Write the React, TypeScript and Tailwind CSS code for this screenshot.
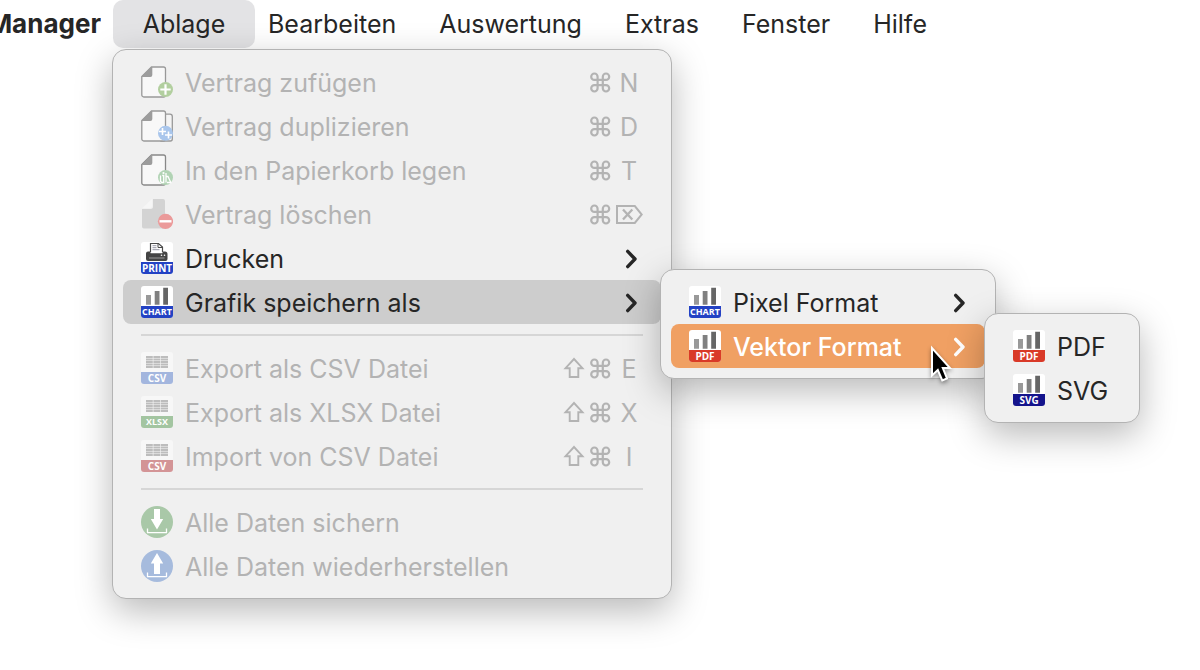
import type { ReactNode } from "react";

const DocOutline = ({ stroke = "#999999" }: { stroke?: string }) => (
  <>
    <path d="M10.5 1H22.5a2 2 0 0 1 2 2V29a2 2 0 0 1-2 2H2.800a2 2 0 0 1-2-2V10.500Z" fill="#f8f8f8" stroke={stroke} strokeWidth="1.300" />
    <path d="M11.300 1V9a2 2 0 0 1-2 2H.8V10.300L10.300 1Z" fill="#9c9c9c" />
  </>
);

const Svg = ({ children }: { children: ReactNode }) => (
  <svg viewBox="0 0 32 32" className="size-8 shrink-0" fill="none" aria-hidden="true">
    {children}
  </svg>
);

const AddIcon = () => (
  <Svg>
    <DocOutline />
    <circle cx="24.5" cy="23.5" r="7.5" fill="#b2cf9f" />
    <path d="M24.5 18.3v10.400M19.300 23.500h10.400" stroke="#fff" strokeWidth="2.200" />
  </Svg>
);

const DuplicateIcon = () => (
  <Svg>
    <path d="M23 4.2h6a2.300 2.300 0 0 1 2.300 2.300V29a2 2 0 0 1-2 2H20Z" fill="#f4f4f4" stroke="#999999" strokeWidth="1.300" />
    <DocOutline />
    <circle cx="24.5" cy="23.3" r="7.5" fill="#a9c6ec" />
    <path d="M21.5 18v7M18 21.500h7M27.500 21.500v7M24 25h7" stroke="#fff" strokeWidth="1.600" />
  </Svg>
);

const TrashIcon = () => (
  <Svg>
    <DocOutline stroke="#888888" />
    <circle cx="24.5" cy="23.5" r="7.5" fill="#b1d3b4" />
    <path d="M19.500 21.500v5a2 2 0 0 0 2 2h1.200V21.500h-1.500" stroke="#fff" strokeWidth="1.300" />
    <path d="M25 28.500v-9.500M25 22.500h2l2.800 6H26" stroke="#fff" strokeWidth="1.300" />
    <circle cx="22.500" cy="19" r="1.100" fill="#fff" />
  </Svg>
);

const DeleteIcon = () => (
  <Svg>
    <path d="M12 1H22a2 2 0 0 1 2 2V30.5H3a2 2 0 0 1-2-2V11H9.5a2.5 2.5 0 0 0 2.5-2.5Z" fill="#d3d3d3" />
    <path d="M11 1V8a2 2 0 0 1-2 2H1.5Z" fill="#f6f6f6" />
    <circle cx="24.5" cy="23.3" r="7.6" fill="#eb9a9a" />
    <path d="M18.5 23.3h12" stroke="#fff" strokeWidth="2.4" />
  </Svg>
);

const TransferIcon = ({ up = false }: { up?: boolean }) => (
  <Svg>
    <circle cx="16" cy="16" r="16" fill={up ? "#a6bbdd" : "#a9c8a8"} />
    {up ? (
      <path d="M16 3l6.200 10.500h-3.200V24h-6V13.500H9.800Z" fill="#fff" />
    ) : (
      <path d="M13 3h6v10h3.200L16 23.500 9.800 13h3.200Z" fill="#fff" />
    )}
    <path d="M6.500 22.500V26.700h19v-4.200" stroke="#fff" strokeWidth="1.300" />
  </Svg>
);

const FileIcon = ({
  label,
  strip,
  size = "text-[10px]",
  faded = false,
  children,
}: {
  label: string;
  strip: string;
  size?: string;
  faded?: boolean;
  children: ReactNode;
}) => (
  <span className={`flex size-8 shrink-0 flex-col overflow-hidden rounded-[3px] ${faded ? "bg-[#f7f7f7]" : "bg-white"}`}>
    <svg viewBox="0 0 32 20" className="h-5 w-8" fill="none" aria-hidden="true">
      {children}
    </svg>
    <span
      className={`flex h-3 items-center justify-center font-['Open_Sans','Noto_Sans',sans-serif] leading-3 font-bold text-white ${size} ${strip}`}
    >
      {label}
    </span>
  </span>
);

const Bars = () => (
  <>
    <path d="M5 9h5v9.700H5Z" fill="#999" />
    <path d="M13.700 5h4.800v13.700h-4.800Z" fill="#808080" />
    <path d="M22.200 1.700H27v17h-4.800Z" fill="#666" />
  </>
);

const Sheet = () => (
  <>
    {[4, 6.5, 9, 11.5, 14].map((y) => (
      <path key={y} d={`M5 ${y}h6.800v1.900H5ZM12.400 ${y}h7v1.900h-7ZM20 ${y}h7v1.900h-7Z`} fill="#bdbdbd" />
    ))}
  </>
);

const Printer = () => (
  <>
    <path d="M9.500 10V1.500h8l4 3.500v5" fill="#fff" stroke="#4a4a4a" strokeWidth="1.200" />
    <path d="M17 1.500V5.500h4" stroke="#4a4a4a" strokeWidth="1" />
    <path d="M11.500 3.700h4M11.500 5.700h4M11.500 7.700h7" stroke="#8b8b9c" strokeWidth=".9" />
    <path d="M7 9.500h2.500v1.800h12V9.500H24a2.500 2.500 0 0 1 2.500 2.500v5a2 2 0 0 1-2 2H7a2 2 0 0 1-2-2V11.500a2 2 0 0 1 2-2Z" fill="#444" />
    <path d="M8 16h15.500" stroke="#999" strokeWidth="1" />
    <circle cx="20.500" cy="13.300" r=".8" fill="#fff" />
    <circle cx="23.500" cy="13.300" r=".8" fill="#fff" />
  </>
);

const ChartIcon = () => (
  <FileIcon label="CHART" strip="bg-[#2342c4]" size="text-[9px]">
    <Bars />
  </FileIcon>
);
const PdfIcon = () => (
  <FileIcon label="PDF" strip="bg-[#d93a28]">
    <Bars />
  </FileIcon>
);

const Glyph = ({ children, label }: { children: ReactNode; label: string }) => (
  <svg viewBox="0 0 26 26" className="size-[26px]" fill="none" stroke="currentColor" strokeWidth="2.200" role="img" aria-label={label}>
    {children}
  </svg>
);

const CommandKey = () => (
  <Glyph label="Command">
    <path d="M8.600 10.900h5.200v5.200H8.600ZM8.600 10.900H5.400A3.200 3.200 0 1 1 8.600 7.700ZM13.800 10.900V7.700A3.200 3.200 0 1 1 17 10.900ZM13.800 16.100H17A3.200 3.200 0 1 1 13.800 19.300ZM8.600 16.100V19.300A3.200 3.200 0 1 1 5.400 16.100Z" />
  </Glyph>
);

const ShiftKey = () => (
  <Glyph label="Shift">
    <path d="M11 4L19.500 13.200H15.300V22H6.700V13.200H2.500Z" strokeWidth="1.900" />
  </Glyph>
);

const DeleteKey = () => (
  <svg viewBox="0 0 28 26" className="h-[26px] w-7" fill="none" stroke="currentColor" strokeWidth="2" role="img" aria-label="Entfernen">
    <path d="M2 5H19.800L26.700 13.500l-6.900 8.500H2Z" />
    <path d="M8 8.500l9.300 10M17.300 8.500L8 18.500" strokeWidth="2.300" />
  </svg>
);

const Chevron = () => (
  <svg viewBox="0 0 12 22" className="h-[22px] w-3" fill="none" stroke="currentColor" strokeWidth="3.400" strokeLinecap="round" strokeLinejoin="round" aria-hidden="true">
    <path d="M2.700 4.400L10 12l-7.300 7.600" />
  </svg>
);

const Pointer = () => (
  <svg viewBox="0 0 24 40" className="pointer-events-none absolute top-[21px] left-[259px] z-20 h-10 w-6 drop-shadow-[0_2px_2px_rgba(0,0,0,0.4)]" aria-hidden="true">
    <path d="M2 3V30.500L7.800 25L12.300 35.500L17 33.500L12.800 23H20Z" fill="#000" stroke="#fff" strokeWidth="2" />
  </svg>
);

const Panel = ({ className, children }: { className: string; children: ReactNode }) => (
  <ul
    role="menu"
    className={`absolute z-10 rounded-[14px] border border-[#b3b3b3] bg-[#f0f0f0] p-[10px] font-normal shadow-[0_12px_36px_rgba(0,0,0,0.28)] ${className}`}
  >
    {children}
  </ul>
);

type RowProps = {
  icon: ReactNode;
  label: string;
  shortcut?: string;
  shift?: boolean;
  arrow?: string;
  disabled?: boolean;
  tone?: string;
  children?: ReactNode;
};

const Row = ({ icon, label, shortcut, shift, arrow, disabled, tone = "text-[#262626]", children }: RowProps) => (
  <li role="none" className="relative">
    <button
      type="button"
      role="menuitem"
      disabled={disabled}
      aria-haspopup={arrow ? "menu" : undefined}
      className={`flex h-11 w-full items-center gap-3 rounded-lg pl-[18px] text-left ${arrow ?? "pr-[18px]"} ${disabled ? "text-[#b3b3b3]" : tone}`}
    >
      {icon}
      <span className="grow pt-0.5 whitespace-nowrap">{label}</span>
      {shortcut && (
        <span className="flex items-center">
          {shift && <ShiftKey />}
          <CommandKey />
          {shortcut === "⌦" ? <DeleteKey /> : <span className="w-7 pt-0.5 text-center">{shortcut}</span>}
        </span>
      )}
      {arrow && <Chevron />}
    </button>
    {children}
  </li>
);

const Divider = () => (
  <li role="separator" className="mx-[18px] my-[10px] h-[2px] bg-[#d6d6d6]" />
);

export default function App() {
  return (
    <div className="min-h-screen overflow-hidden bg-white font-[Inter,'Liberation_Sans',sans-serif] text-[25px] leading-8 text-[#262626]">
      <nav aria-label="Menüleiste" className="flex h-12 items-center">
        <span className="flex w-[101px] shrink-0 justify-end overflow-hidden text-[26px] font-bold">Manager</span>
        <div className="relative ml-3 shrink-0">
          <button type="button" aria-haspopup="menu" aria-expanded="true" className="h-12 w-[142px] rounded-[10px] bg-[#e3e3e5] text-center">
            Ablage
          </button>
          <Panel className="top-[49px] -left-px w-[560px]">
            <Row icon={<AddIcon />} label="Vertrag zufügen" shortcut="N" disabled />
            <Row icon={<DuplicateIcon />} label="Vertrag duplizieren" shortcut="D" disabled />
            <Row icon={<TrashIcon />} label="In den Papierkorb legen" shortcut="T" disabled />
            <Row icon={<DeleteIcon />} label="Vertrag löschen" shortcut="⌦" disabled />
            <Row
              icon={
                <FileIcon label="PRINT" strip="bg-[#2342c4]">
                  <Printer />
                </FileIcon>
              }
              label="Drucken"
              arrow="pr-6"
            />
            <Row icon={<ChartIcon />} label="Grafik speichern als" arrow="pr-6" tone="bg-[#cdcdcd] text-[#262626]">
              <Panel className="-top-[11px] left-full -ml-px w-[336px]">
                <Row icon={<ChartIcon />} label="Pixel Format" arrow="pr-5" />
                <Row icon={<PdfIcon />} label="Vektor Format" arrow="pr-5" tone="bg-[#f0a063] font-medium text-white">
                  <Panel className="-top-[11px] left-full -ml-px w-[156px]">
                    <Row icon={<PdfIcon />} label="PDF" />
                    <Row
                      icon={
                        <FileIcon label="SVG" strip="bg-[#14148c]">
                          <Bars />
                        </FileIcon>
                      }
                      label="SVG"
                    />
                  </Panel>
                  <Pointer />
                </Row>
              </Panel>
            </Row>
            <Divider />
            <Row
              icon={
                <FileIcon label="CSV" strip="bg-[#a3b6de]" faded>
                  <Sheet />
                </FileIcon>
              }
              label="Export als CSV Datei"
              shortcut="E"
              shift
              disabled
            />
            <Row
              icon={
                <FileIcon label="XLSX" strip="bg-[#a3c5a1]" size="text-[9px]" faded>
                  <Sheet />
                </FileIcon>
              }
              label="Export als XLSX Datei"
              shortcut="X"
              shift
              disabled
            />
            <Row
              icon={
                <FileIcon label="CSV" strip="bg-[#d39496]" faded>
                  <Sheet />
                </FileIcon>
              }
              label="Import von CSV Datei"
              shortcut="I"
              shift
              disabled
            />
            <Divider />
            <Row icon={<TransferIcon />} label="Alle Daten sichern" disabled />
            <Row icon={<TransferIcon up />} label="Alle Daten wiederherstellen" disabled />
          </Panel>
        </div>
        <div className="ml-[13px] flex gap-[43px]">
          <button type="button">Bearbeiten</button>
          <button type="button">Auswertung</button>
          <button type="button">Extras</button>
          <button type="button">Fenster</button>
          <button type="button">Hilfe</button>
        </div>
      </nav>
    </div>
  );
}
